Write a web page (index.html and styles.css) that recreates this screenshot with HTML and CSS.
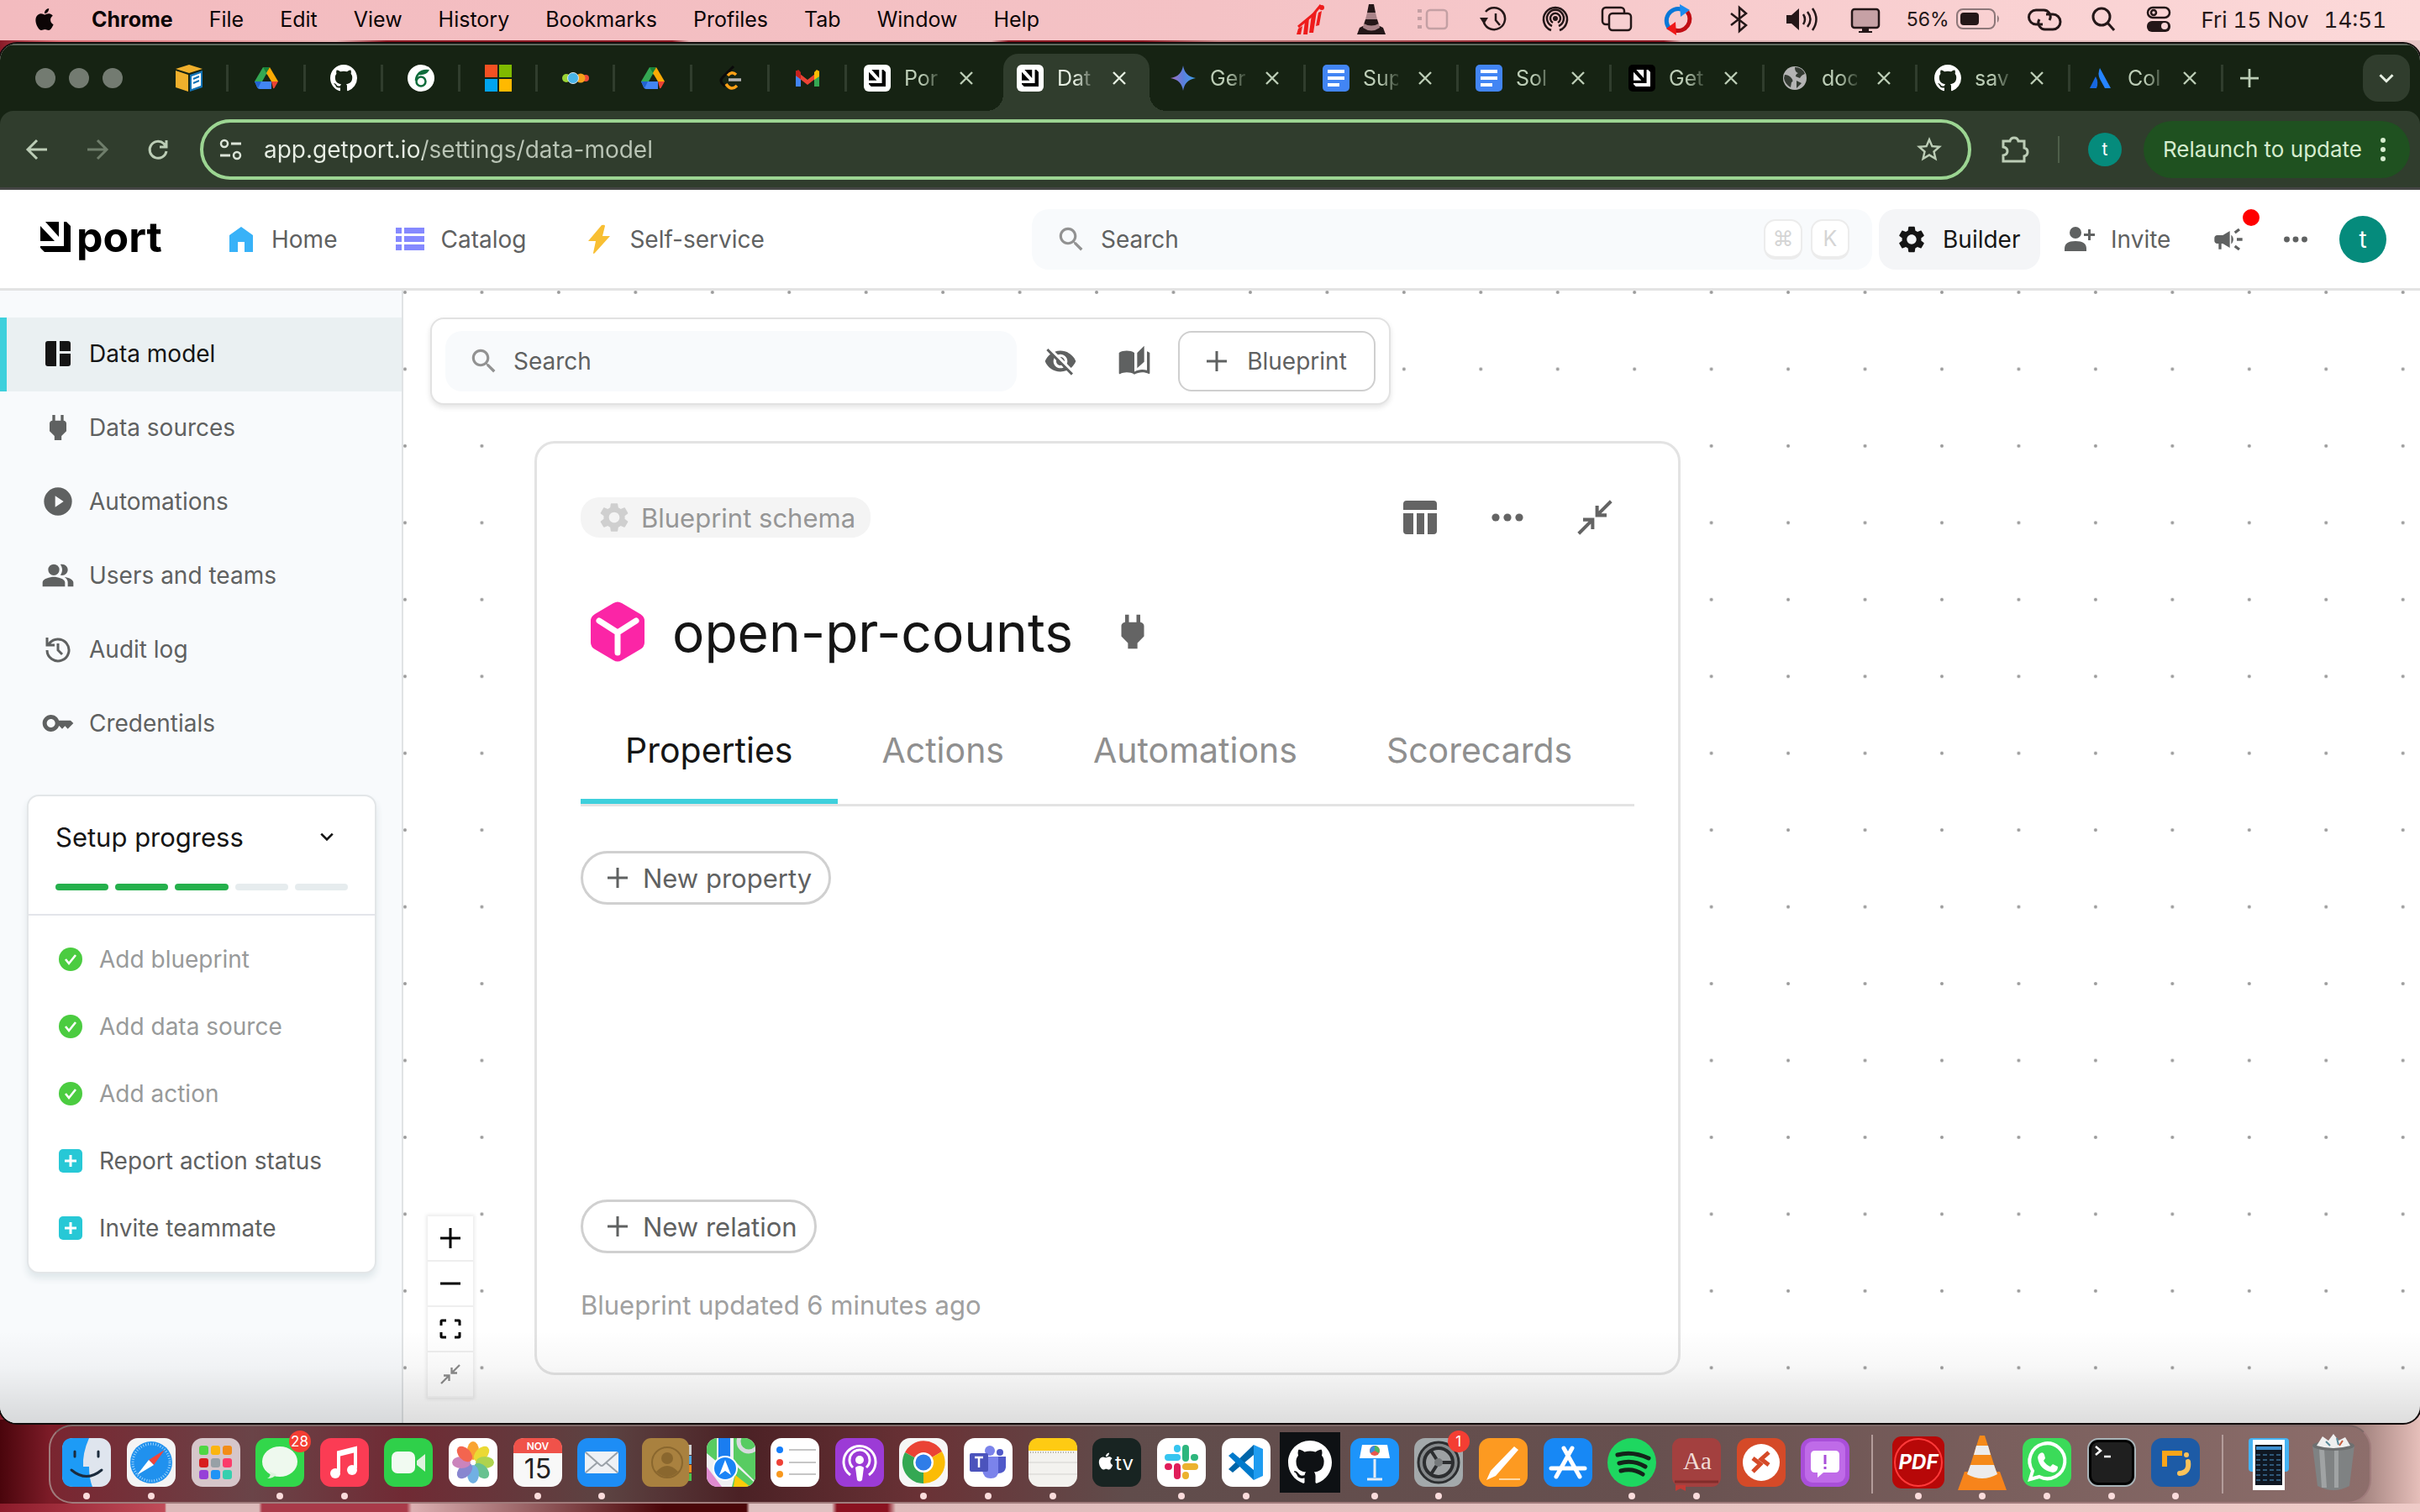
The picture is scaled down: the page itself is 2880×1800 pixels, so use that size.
FILE: index.html
```html
<!DOCTYPE html>
<html lang="en">
<head>
<meta charset="utf-8">
<title>Data model</title>
<link rel="stylesheet" href="styles.css">
</head>
<body>
<svg class="sprite" aria-hidden="true">
  <symbol id="apple" viewBox="0 0 24 24"><path d="M12.152 6.896c-.948 0-2.415-1.078-3.96-1.04-2.04.027-3.91 1.183-4.961 3.014-2.117 3.675-.546 9.103 1.519 12.09 1.013 1.454 2.208 3.09 3.792 3.039 1.52-.065 2.09-.987 3.935-.987 1.831 0 2.35.987 3.96.948 1.637-.026 2.676-1.48 3.676-2.948 1.156-1.688 1.636-3.325 1.662-3.415-.039-.013-3.182-1.221-3.22-4.857-.026-3.04 2.48-4.494 2.597-4.559-1.429-2.09-3.623-2.324-4.39-2.376-2-.156-3.675 1.09-4.61 1.09zM15.53 3.83c.843-1.012 1.4-2.427 1.245-3.83-1.207.052-2.662.805-3.532 1.818-.78.896-1.454 2.338-1.273 3.714 1.338.104 2.715-.688 3.559-1.701"/></symbol>
  <symbol id="github" viewBox="0 0 16 16"><path d="M8 0C3.58 0 0 3.58 0 8c0 3.54 2.29 6.53 5.47 7.59.4.07.55-.17.55-.38 0-.19-.01-.82-.01-1.49-2.01.37-2.53-.49-2.69-.94-.09-.23-.48-.94-.82-1.13-.28-.15-.68-.52-.01-.53.63-.01 1.08.58 1.23.82.72 1.21 1.87.87 2.33.66.07-.52.28-.87.51-1.07-1.78-.2-3.64-.89-3.64-3.95 0-.87.31-1.59.82-2.15-.08-.2-.36-1.02.08-2.12 0 0 .67-.21 2.2.82.64-.18 1.32-.27 2-.27s1.36.09 2 .27c1.53-1.04 2.2-.82 2.2-.82.44 1.1.16 1.92.08 2.12.51.56.82 1.27.82 2.15 0 3.07-1.87 3.75-3.65 3.95.29.25.54.73.54 1.48 0 1.07-.01 1.93-.01 2.2 0 .21.15.46.55.38A8.01 8.01 0 0016 8c0-4.42-3.58-8-8-8z"/></symbol>
  <symbol id="drive" viewBox="0 0 32 32"><path fill="#34a853" d="M12 3h4l3 5L7 28l-5-8z"/><path fill="#188038" d="M12 3h8l-4 7z"/><path fill="#fbab04" d="M20 3l10 17h-8l-6-10z"/><path fill="#4285f4" d="M2 20h20v9H8q-2 0-3-2z"/><path fill="#2263d0" d="M2 20h8l-4 8z"/><path fill="#ea4335" d="M22 20h8l-4 7q-1 2-2 1z"/><path fill="#162313" d="M16 11l5 9H11z"/></symbol>
  <symbol id="portmark" viewBox="0 0 36 36"><path d="M6 0h16v18zM0 5l17 18H0zM28 0h3l5 5v31H5l-5-5v-2h28z"/></symbol>
  <symbol id="portlight" viewBox="0 0 32 32"><rect width="32" height="32" rx="6" fill="#fff"/><svg x="6" y="6" width="20" height="20"><use href="#portmark"/></svg></symbol>
  <symbol id="docs" viewBox="0 0 32 32"><rect width="32" height="32" rx="5" fill="#4285f4"/><path fill="#fff" d="M6 6h20v4H6zM6 14h20v4H6zM6 22h14v4H6z"/></symbol>
  <symbol id="close" viewBox="0 0 16 16"><path d="M1 1l14 14M15 1L1 15" stroke="currentColor" stroke-width="2.4" fill="none"/></symbol>
  <symbol id="gear" viewBox="0 0 24 24"><path d="M19.14 12.94c.04-.3.06-.61.06-.94 0-.32-.02-.64-.07-.94l2.03-1.58c.18-.14.23-.41.12-.61l-1.92-3.32c-.12-.22-.37-.29-.59-.22l-2.39.96c-.5-.38-1.03-.7-1.62-.94l-.36-2.54c-.04-.24-.24-.41-.48-.41h-3.84c-.24 0-.43.17-.47.41l-.36 2.54c-.59.24-1.13.57-1.62.94l-2.39-.96c-.22-.08-.47 0-.59.22L2.74 8.87c-.12.21-.08.47.12.61l2.03 1.58c-.05.3-.09.63-.09.94s.02.64.07.94l-2.03 1.58c-.18.14-.23.41-.12.61l1.92 3.32c.12.22.37.29.59.22l2.39-.96c.5.38 1.03.7 1.62.94l.36 2.54c.05.24.24.41.48.41h3.84c.24 0 .44-.17.47-.41l.36-2.54c.59-.24 1.13-.56 1.62-.94l2.39.96c.22.08.47 0 .59-.22l1.92-3.32c.12-.22.07-.47-.12-.61l-2.01-1.58zM12 15.6c-1.98 0-3.6-1.62-3.6-3.6s1.62-3.6 3.6-3.6 3.6 1.62 3.6 3.6-1.62 3.6-3.6 3.6z"/></symbol>
  <symbol id="search" viewBox="0 0 24 24"><path d="M15.5 14h-.79l-.28-.27C15.41 12.59 16 11.11 16 9.5 16 5.91 13.09 3 9.5 3S3 5.91 3 9.5 5.91 16 9.5 16c1.61 0 3.09-.59 4.23-1.57l.27.28v.79l5 4.99L20.49 19l-4.99-5zm-6 0C7.01 14 5 11.99 5 9.5S7.01 5 9.5 5 14 7.01 14 9.5 11.99 14 9.5 14z"/></symbol>
  <symbol id="plug" viewBox="0 0 24 24"><path d="M16.01 7L16 3h-2v4h-4V3H8v4h-.01C7 6.99 6 7.99 6 8.99v5.49L9.5 18v3h5v-3l3.5-3.51v-5.5c0-1-1-2-1.99-1.99z"/></symbol>
  <symbol id="more" viewBox="0 0 24 24"><circle cx="5" cy="12" r="2.3"/><circle cx="12" cy="12" r="2.3"/><circle cx="19" cy="12" r="2.3"/></symbol>
  <symbol id="plus" viewBox="0 0 24 24"><path d="M12 0v24M0 12h24" stroke="currentColor" stroke-width="3" fill="none"/></symbol>
  <symbol id="collapse" viewBox="0 0 24 24"><path d="M23 1l-9.500 9.500M13.500 4v6.500H20M1 23l9.500-9.500M4 13.500h6.500V20" stroke="currentColor" stroke-width="2.300" fill="none"/></symbol>
  <symbol id="done" viewBox="0 0 28 28"><circle cx="14" cy="14" r="14" fill="#4bcc40"/><path d="M8 14l4 5 8-10" stroke="#fff" stroke-width="2.600" fill="none"/></symbol>
  <symbol id="todo" viewBox="0 0 28 28"><rect width="28" height="28" rx="5" fill="#27c8d6"/><path d="M14 7v14M7 14h14" stroke="#fff" stroke-width="3" fill="none"/></symbol>
  <symbol id="chevron" viewBox="0 0 16 16"><path d="M2 5l6 6 6-6" stroke="currentColor" stroke-width="2.400" fill="none"/></symbol>
</svg>

<div class="desktop">
  <header class="menubar">
    <nav class="menus" aria-label="Menu bar">
      <svg class="i28"><use href="#apple"/></svg>
      <b>Chrome</b><span>File</span><span>Edit</span><span>View</span><span>History</span><span>Bookmarks</span><span>Profiles</span><span>Tab</span><span>Window</span><span>Help</span>
    </nav>
    <div class="status">
      <svg class="i36" viewBox="0 0 36 36"><path d="M2 36l2-7 5-3-2 10zM10 36l2-16 5-4-2 20zM17 34l3-22 6-4-4 26zM25 26l3-16 4-2-3 17z" fill="#ee1c1c"/><path d="M4 27L22 12l9-11" stroke="#ee1c1c" stroke-width="3" fill="none"/><circle cx="32" cy="4" r="3" fill="#ee1c1c"/></svg>
      <svg class="i36" viewBox="0 0 36 36"><path d="M15 0h6l2 10H13zM11 18h14l2 6q-9 5-18 0zM8 26l-4 2-3 8h34l-3-8-4-2q-10 6-20 0z"/><path d="M13 10h10l2 8H11zM9 23q9 5 18 0l1 5q-10 7-20 0z" fill="#a98388"/></svg>
      <svg class="i36 faint" viewBox="0 0 36 36"><rect x="11" y="7" width="24" height="22" rx="4" class="line"/><path d="M0 8h5M0 17h5M0 27h5" stroke="currentColor" stroke-width="4"/></svg>
      <svg class="i36" viewBox="0 0 36 36"><path d="M8 9a13 13 0 1 1-2 13M20 11v8l5 6" class="line"/><path d="M1 16h10l-5 8z"/></svg>
      <svg class="i36" viewBox="0 0 36 36"><circle cx="18" cy="17" r="3"/><path d="M13 31a14 14 0 1 1 10 0M14 26a10 10 0 1 1 8 0M15 22a6 6 0 1 1 6 0" class="line"/></svg>
      <svg class="i36" viewBox="0 0 36 36"><rect x="1" y="4" width="26" height="20" rx="4" class="line"/><rect x="9" y="11" width="26" height="20" rx="4" class="line front"/></svg>
      <svg class="i36" viewBox="0 0 36 36"><path d="M8 29A14 14 0 0 1 22 6" stroke="#0a78d8" stroke-width="5" fill="none"/><path d="M20 0l12 7-11 8z" fill="#1b8cf0"/><path d="M29 9a14 14 0 0 1-15 22" stroke="#c00d14" stroke-width="5" fill="none"/><path d="M16 37L4 29l11-8z" fill="#f01818"/></svg>
      <svg class="i36" viewBox="0 0 36 36"><path d="M8 11l18 14-8 7V4l8 7L8 25" class="line"/></svg>
      <svg class="i40" viewBox="0 0 40 36"><path d="M1 13h6l9-8v26l-9-8H1z"/><path d="M21 12q4 6 0 12M26 9q7 9 0 18M32 5q9 13 0 26" class="line"/></svg>
      <svg class="i36" viewBox="0 0 36 36"><rect x="2" y="6" width="32" height="22" rx="3" class="line shaded"/><path d="M14 28h8v4h4v2H10v-2h4z"/></svg>
      <span class="battery">56%<svg viewBox="0 0 52 26"><rect x="1" y="1" width="45" height="23" rx="7" fill="none" stroke="#8d7779" stroke-width="2"/><rect x="5" y="5" width="22" height="15" rx="4"/><path d="M49 8q4 4 0 9z" fill="#8d7779"/></svg></span>
      <svg class="i44" viewBox="0 0 44 30"><path d="M20 21h-8a8 8 0 1 1 0-17h8a8 8 0 0 1 8 12M24 9h8a8 8 0 1 1 0 18h-8a8 8 0 0 1-8-12" class="line thick"/></svg>
      <svg class="i36" viewBox="0 0 36 36"><circle cx="16" cy="15" r="10" class="line thick"/><path d="M23 22l8 9" class="line thick"/></svg>
      <svg class="i36" viewBox="0 0 36 36"><rect x="5" y="4" width="26" height="12" rx="6" class="line"/><circle cx="12" cy="10" r="3" class="line"/><rect x="4" y="20" width="28" height="13" rx="6"/><circle cx="25" cy="26" r="4" fill="#f9d4d5"/></svg>
      <time><span>Fri 15 Nov</span><span>14:51</span></time>
    </div>
  </header>

  <main class="window">
    <div class="chrome">
    <div class="tabstrip">
      <div class="lights"><i></i><i></i><i></i></div>
      <div class="pins">
        <button aria-label="Cloud console"><svg viewBox="0 0 32 32"><path d="M16 0l16 5-16 5L0 5z" fill="#f0b02c"/><path d="M0 7l15 5v20L0 27z" fill="#f0b02c"/><path d="M17 12l15-5v20l-15 5z" fill="#1272b5"/><path d="M19 14l11-4v15l-11 4z" fill="#fff"/><path d="M21 17l7-3M21 22l7-3" stroke="#1272b5" stroke-width="2"/></svg></button>
        <button aria-label="Drive"><svg><use href="#drive"/></svg></button>
        <button aria-label="GitHub"><svg class="white"><use href="#github"/></svg></button>
        <button aria-label="Guide"><svg viewBox="0 0 32 32"><circle cx="16" cy="16" r="16" fill="#fff"/><path d="M15 9q-5 4-5 10" fill="none" stroke="#0f6c3c" stroke-width="2.500"/><circle cx="16" cy="20" r="5.500" fill="none" stroke="#0f6c3c" stroke-width="2.500"/><path d="M13 10q3-5 13-4-3 7-13 6z" fill="#0f6c3c"/></svg></button>
        <button aria-label="Microsoft"><svg viewBox="0 0 32 32"><path fill="#f25022" d="M0 0h15v15H0z"/><path fill="#7fba00" d="M17 0h15v15H17z"/><path fill="#00a4ef" d="M0 17h15v15H0z"/><path fill="#ffb900" d="M17 17h15v15H17z"/></svg></button>
        <button aria-label="Community"><svg viewBox="0 0 32 32"><circle cx="5" cy="16" r="5" fill="#9bd334"/><circle cx="28" cy="16" r="4" fill="#ef4a3a"/><circle cx="22" cy="16" r="5.500" fill="#f7a11b"/><circle cx="13" cy="16" r="6.500" fill="#49b4e8" stroke="#dfe8ee"/></svg></button>
        <button aria-label="Drive"><svg><use href="#drive"/></svg></button>
        <button aria-label="Practice"><svg viewBox="0 0 32 32"><path d="M20 2L7 15q-4 4 0 8l3 3" stroke="#0a0a0a" stroke-width="3" fill="none"/><path d="M13 13q5-6 10-1M11 23q6 9 13 2" stroke="#ffa116" stroke-width="3.500" fill="none"/><path d="M14 18h15" stroke="#b3b3b3" stroke-width="3.500"/></svg></button>
        <button aria-label="Gmail"><svg viewBox="0 0 32 32"><path d="M2 8v18h6V13z" fill="#4285f4"/><path d="M30 8v18h-6V13z" fill="#34a853"/><path d="M2 7l14 11L30 7v6L16 24 2 13z" fill="#ea4335"/><path d="M24 9l3-3 3 2v6l-6 4z" fill="#fbbc04"/><path d="M2 8l3-2 3 3v8l-6-4z" fill="#c5221f"/></svg></button>
      </div>
      <div class="tabs">
        <div class="tab"><svg><use href="#portlight"/></svg><span>Por</span><button aria-label="Close tab"><svg><use href="#close"/></svg></button></div>
        <div class="tab active"><svg><use href="#portlight"/></svg><span>Dat</span><button aria-label="Close tab"><svg><use href="#close"/></svg></button></div>
        <div class="tab"><svg viewBox="0 0 32 32"><defs><linearGradient id="gem"><stop offset="0" stop-color="#a46fc0"/><stop offset=".5" stop-color="#5b7fdc"/><stop offset="1" stop-color="#3fa0ea"/></linearGradient></defs><path fill="url(#gem)" d="M16 1q2 13 15 15-13 2-15 15Q14 18 1 16 14 14 16 1z"/></svg><span>Ger</span><button aria-label="Close tab"><svg><use href="#close"/></svg></button></div>
        <div class="tab"><svg><use href="#docs"/></svg><span>Sup</span><button aria-label="Close tab"><svg><use href="#close"/></svg></button></div>
        <div class="tab"><svg><use href="#docs"/></svg><span>Sol</span><button aria-label="Close tab"><svg><use href="#close"/></svg></button></div>
        <div class="tab"><svg viewBox="0 0 32 32"><rect width="32" height="32" rx="5" fill="#000"/><svg class="white" x="6" y="6" width="20" height="20"><use href="#portmark"/></svg></svg><span>Get</span><button aria-label="Close tab"><svg><use href="#close"/></svg></button></div>
        <div class="tab"><svg viewBox="0 0 32 32"><circle cx="16" cy="16" r="14" fill="#b4b4b4"/><path d="M4 12q5 0 8 4t0 5l-1 6q-7-4-8-11zM16 3q9 0 12 8-4 1-6 5l-5-2q0-3 3-4-4-1-4-7zM18 19l6 3-6 6z" fill="#343b33"/></svg><span>doc</span><button aria-label="Close tab"><svg><use href="#close"/></svg></button></div>
        <div class="tab"><svg class="white"><use href="#github"/></svg><span>sav</span><button aria-label="Close tab"><svg><use href="#close"/></svg></button></div>
        <div class="tab"><svg viewBox="0 0 32 32"><path d="M15 4q-3 7 0 13l6 11h7z" fill="#2684ff"/><path d="M10 14L3 28h8q3-7-1-14z" fill="#1767e0"/></svg><span>Col</span><button aria-label="Close tab"><svg><use href="#close"/></svg></button></div>
      </div>
      <button class="newtab" aria-label="New tab"><svg><use href="#plus"/></svg></button>
      <button class="tabmenu" aria-label="Search tabs"><svg><use href="#chevron"/></svg></button>
    </div>

    <div class="toolbar">
      <button aria-label="Back"><svg viewBox="0 0 24 24"><path d="M24 12H2M12 1L1 12l11 11" class="line thick"/></svg></button>
      <button class="dim" aria-label="Forward"><svg viewBox="0 0 24 24"><path d="M0 12h22M12 1l11 11-11 11" class="line thick"/></svg></button>
      <button aria-label="Reload"><svg viewBox="0 0 24 24"><path d="M22 14a10 10 0 1 1-3-9l3 4M22 1v8h-8" class="line thick"/></svg></button>
      <label class="omnibox">
        <svg viewBox="0 0 28 28"><circle cx="6" cy="7" r="4" class="line"/><path d="M14 7h12M1 21h12" class="line thick"/><circle cx="21" cy="21" r="4" class="line"/></svg>
        <input type="text" aria-label="Address" value="app.getport.io/settings/data-model">
        <svg class="star" viewBox="0 0 24 24"><path d="M22 9.240l-7.190-.62L12 2 9.190 8.630 2 9.240l5.460 4.730L5.820 21 12 17.270 18.180 21l-1.630-7.030L22 9.240zM12 15.400l-3.760 2.270 1-4.280-3.320-2.880 4.380-.38L12 6.100l1.710 4.040 4.380.38-3.320 2.880 1 4.280L12 15.400z"/></svg>
      </label>
      <button class="puzzle" aria-label="Extensions"><svg viewBox="0 0 34 34"><path d="M3 7h8q1-4 5-4t5 4h7v8q4 1 4 5t-4 5v6H3v-7q5-1 5-5t-5-5z" class="line thick"/></svg></button>
      <i class="rule"></i>
      <span class="avatar small">t</span>
      <button class="relaunch">Relaunch to update<svg viewBox="0 0 6 30"><circle cx="3" cy="4" r="3"/><circle cx="3" cy="15" r="3"/><circle cx="3" cy="26" r="3"/></svg></button>
    </div>
    </div>

    <div class="appbar">
      <a class="logo" href="#"><svg><use href="#portmark"/></svg>port</a>
      <nav class="topnav">
        <a href="#"><svg viewBox="0 0 36 36"><path d="M18 3L4 13v20h10V21h8v12h10V13z" fill="#38b2f8"/></svg>Home</a>
        <a href="#"><svg viewBox="0 0 36 36"><path d="M1 4h7v7H1zM11 4h24v7H11zM1 14h7v7H1zM11 14h24v7H11zM1 24h7v7H1zM11 24h24v7H11z" fill="#8589ff"/></svg>Catalog</a>
        <a href="#"><svg viewBox="0 0 36 36"><path d="M21 1L5 20h9l-3 14q0 2 2 0l18-20h-9l3-12q0-2-4-1z" fill="#f8bf33"/></svg>Self-service</a>
      </nav>
      <label class="search global"><svg><use href="#search"/></svg><input type="text" placeholder="Search" aria-label="Search"><kbd>⌘</kbd><kbd>K</kbd></label>
      <button class="builder"><svg><use href="#gear"/></svg>Builder</button>
      <button class="invite"><svg viewBox="0 0 38 38"><circle cx="14" cy="11" r="7"/><path d="M1 33v-3q0-9 13-9t13 9v3zM29 7h3v5h5v3h-5v5h-3v-5h-5v-3h5z"/></svg>Invite</button>
      <button class="news" aria-label="Announcements"><svg viewBox="0 0 24 24"><path d="M18 11v2h4v-2h-4zm-2 6.610c.96.71 2.210 1.650 3.200 2.390.4-.53.8-1.070 1.200-1.600-.99-.74-2.240-1.680-3.200-2.400-.4.54-.8 1.080-1.200 1.610zM20.400 5.600c-.4-.53-.8-1.070-1.200-1.600-.99.74-2.240 1.680-3.200 2.400.4.53.8 1.070 1.200 1.600.96-.72 2.210-1.650 3.200-2.400zM4 9c-1.100 0-2 .9-2 2v2c0 1.100.9 2 2 2h1v4h2v-4h1l5 3V6L8 9H4zm11.500 3c0-1.330-.58-2.530-1.500-3.350v6.690c.92-.81 1.500-2.010 1.500-3.340z"/></svg></button>
      <button class="dots" aria-label="More"><svg><use href="#more"/></svg></button>
      <button class="avatar" aria-label="Account">t</button>
    </div>

    <div class="body">
      <aside class="sidebar">
        <nav>
          <a class="on" href="#"><svg viewBox="0 0 30 30"><path d="M3 0h10v30H3q-3 0-3-3V3q0-3 3-3zM17 0h10q3 0 3 3v9H17zM17 15h13v12q0 3-3 3H17z"/></svg>Data model</a>
          <a href="#"><svg class="big"><use href="#plug"/></svg>Data sources</a>
          <a href="#"><svg viewBox="0 0 24 24" class="big"><path d="M12 2a10 10 0 1 0 0 20 10 10 0 0 0 0-20zm-2 14V8l6 4z"/></svg>Automations</a>
          <a href="#"><svg viewBox="0 0 24 24" class="big"><path d="M16.670 13.130C18.040 14.060 19 15.320 19 17v3h4v-3c0-2.180-3.570-3.470-6.330-3.870zM15 12c2.210 0 4-1.790 4-4s-1.790-4-4-4c-.47 0-.91.1-1.330.24C14.500 5.270 15 6.580 15 8s-.5 2.730-1.330 3.760c.42.14.86.24 1.330.24zM9 12a4 4 0 100-8 4 4 0 000 8zm0 1c-2.670 0-8 1.340-8 4v3h16v-3c0-2.660-5.330-4-8-4z"/></svg>Users and teams</a>
          <a href="#"><svg viewBox="0 0 30 30"><path d="M4 9A13 13 0 1 1 2 16M2 1v9h9M15 8v8l5 5" class="line thick"/></svg>Audit log</a>
          <a href="#"><svg viewBox="0 0 24 24" class="big"><path d="M21 10h-8.350C11.830 7.670 9.610 6 7 6c-3.310 0-6 2.690-6 6s2.690 6 6 6c2.610 0 4.830-1.670 5.650-4H13l2 2 2-2 2 2 4-4.040L21 10zM7 15c-1.650 0-3-1.350-3-3s1.350-3 3-3 3 1.350 3 3-1.350 3-3 3z"/></svg>Credentials</a>
        </nav>
        <section class="setup">
          <button class="setup-head" aria-label="Toggle setup progress">Setup progress<svg><use href="#chevron"/></svg></button>
          <div class="bars"><i class="full"></i><i class="full"></i><i class="full"></i><i></i><i></i></div>
          <ul>
            <li class="finished"><svg><use href="#done"/></svg>Add blueprint</li>
            <li class="finished"><svg><use href="#done"/></svg>Add data source</li>
            <li class="finished"><svg><use href="#done"/></svg>Add action</li>
            <li><svg><use href="#todo"/></svg>Report action status</li>
            <li><svg><use href="#todo"/></svg>Invite teammate</li>
          </ul>
        </section>
      </aside>

      <section class="canvas">
        <svg class="grid" aria-hidden="true"><defs><pattern id="dots" width="91.450" height="91.450" patternUnits="userSpaceOnUse"><circle cx="2" cy="2" r="2" fill="#9a9a9a"/></pattern></defs><rect width="100%" height="100%" fill="url(#dots)"/></svg>
        <div class="panel">
          <label class="search"><svg><use href="#search"/></svg><input type="text" placeholder="Search" aria-label="Search blueprints"></label>
          <button class="icon" aria-label="Hide blueprints"><svg viewBox="0 0 24 24"><path d="M12 7c2.760 0 5 2.240 5 5 0 .65-.13 1.260-.36 1.830l2.920 2.920c1.510-1.260 2.700-2.890 3.430-4.750-1.730-4.390-6-7.500-11-7.500-1.400 0-2.740.25-3.980.7l2.160 2.160C10.740 7.130 11.350 7 12 7zM2 4.270l2.280 2.280.46.46C3.080 8.300 1.780 10.020 1 12c1.730 4.390 6 7.500 11 7.500 1.550 0 3.030-.3 4.380-.84l.42.42L19.730 22 21 20.730 3.270 3 2 4.270zM7.530 9.800l1.550 1.550c-.05.21-.08.43-.08.65 0 1.660 1.340 3 3 3 .22 0 .44-.03.65-.08l1.550 1.550c-.67.33-1.410.53-2.200.53-2.760 0-5-2.240-5-5 0-.79.2-1.530.53-2.200zm4.310-.78l3.150 3.150.02-.16c0-1.660-1.340-3-3-3l-.17.01z"/></svg></button>
          <button class="icon" aria-label="Legend"><svg viewBox="0 0 24 24"><path d="M19 1l-5 5v11l5-4.500V1zM1 6v14.650c0 .25.25.5.5.5.1 0 .15-.05.25-.05C3.100 20.450 5.050 20 6.500 20c1.950 0 4.050.4 5.500 1.500V6c-1.450-1.100-3.550-1.500-5.500-1.500S2.450 4.900 1 6zm22 13.500V6c-.6-.45-1.250-.75-2-1v13.500c-1.100-.35-2.300-.5-3.500-.5-1.700 0-4.150.65-5.500 1.500v2c1.350-.85 3.800-1.500 5.500-1.500 1.650 0 3.350.3 4.750 1.050.1.05.15.05.25.05.25 0 .5-.25.5-.5v-1.100z"/></svg></button>
          <button class="add"><svg><use href="#plus"/></svg>Blueprint</button>
        </div>

        <article class="node">
          <div class="node-top">
            <span class="chip"><svg><use href="#gear"/></svg>Blueprint schema</span>
            <span class="tools">
              <button aria-label="Table"><svg viewBox="0 0 24 24"><path d="M10 9.500h4.500V22H10zM16.500 22H20q2 0 2-2V9.500h-5.500zM20 2H4Q2 2 2 4v3.500h20V4q0-2-2-2zM2 20q0 2 2 2h4V9.500H2z"/></svg></button>
              <button aria-label="More"><svg><use href="#more"/></svg></button>
              <button aria-label="Collapse"><svg><use href="#collapse"/></svg></button>
            </span>
          </div>
          <h1><svg class="cube" viewBox="0 0 64 72"><path d="M27 2q5-3 10 0l22 13q5 3 5 8v26q0 5-5 8L37 70q-5 3-10 0L5 57q-5-3-5-8V23q0-5 5-8z" fill="#fb25a6"/><path d="M10 23l22 14 22-14M32 37v24" stroke="#fff" stroke-width="7" stroke-linecap="round" fill="none"/></svg>open-pr-counts<svg class="plug"><use href="#plug"/></svg></h1>
          <div class="node-tabs" role="tablist">
            <button class="on" role="tab">Properties</button><button role="tab">Actions</button><button role="tab">Automations</button><button role="tab">Scorecards</button>
          </div>
          <button class="pill"><svg><use href="#plus"/></svg>New property</button>
          <button class="pill relation"><svg><use href="#plus"/></svg>New relation</button>
          <p>Blueprint updated 6 minutes ago</p>
        </article>

        <div class="zoom">
          <button aria-label="Zoom in"><svg><use href="#plus"/></svg></button>
          <button aria-label="Zoom out"><svg viewBox="0 0 24 24"><path d="M0 12h24" stroke="currentColor" stroke-width="3"/></svg></button>
          <button aria-label="Fit view"><svg viewBox="0 0 24 24"><path d="M1 8V3q0-1 1-1h5M17 2h5q1 0 1 1v5M23 16v5q0 1-1 1h-5M7 22H2q-1 0-1-1v-5" stroke="currentColor" stroke-width="3" fill="none"/></svg></button>
          <button class="dim" aria-label="Collapse all"><svg><use href="#collapse"/></svg></button>
        </div>
      </section>
    </div>
  </main>

  <nav class="dock" aria-label="Dock">
    <button class="run" aria-label="Finder"><svg viewBox="0 0 58 58"><rect width="58" height="58" rx="13" fill="#dfe5ee"/><path d="M13 0h19q-8 18-7 34h7q0 14 4 24H13Q0 58 0 45V13Q0 0 13 0z" fill="#1d9bf6"/><path d="M15 16v6M43 16v6M11 38q18 15 36 0" stroke="#1b2b3c" stroke-width="3" stroke-linecap="round" fill="none"/></svg></button>
    <button class="run" aria-label="Safari"><svg viewBox="0 0 58 58"><rect width="58" height="58" rx="13" fill="#f4f4f4"/><circle cx="29" cy="29" r="25" fill="#2091ee"/><circle cx="29" cy="29" r="22" fill="none" stroke="#9fd4fb" stroke-width="3" stroke-dasharray="1 2"/><path d="M45 14L32 32l-6-6z" fill="#f0453b"/><path d="M12 44l14-18 6 6z" fill="#fff"/></svg></button>
    <button aria-label="Launchpad"><svg viewBox="0 0 58 58"><rect width="58" height="58" rx="13" fill="#d6c6ca"/><g><rect x="9" y="9" width="11" height="11" rx="3" fill="#4fd643"/><rect x="23" y="9" width="11" height="11" rx="3" fill="#fbb50f"/><rect x="37" y="9" width="11" height="11" rx="3" fill="#f28c18"/><rect x="9" y="24" width="11" height="11" rx="3" fill="#d81d1d"/><rect x="23" y="24" width="11" height="11" rx="3" fill="#97a0a6"/><rect x="37" y="24" width="11" height="11" rx="3" fill="#fb3c6a"/><rect x="9" y="38" width="11" height="11" rx="3" fill="#9641d8"/><rect x="23" y="38" width="11" height="11" rx="3" fill="#1f93f5"/><rect x="37" y="38" width="11" height="11" rx="3" fill="#37cfae"/></g></svg></button>
    <button class="run" aria-label="Messages"><svg viewBox="0 0 58 58"><rect width="58" height="58" rx="13" fill="#32d74b"/><ellipse cx="29" cy="28" rx="21" ry="18" fill="#eef9ee"/><path d="M17 40q2 6-3 8 8 0 11-5z" fill="#dff3df"/></svg><em>28</em></button>
    <button class="run" aria-label="Music"><svg viewBox="0 0 58 58"><rect width="58" height="58" rx="13" fill="#fb3c54"/><path d="M22 40V17l20-5v24" stroke="#fff" stroke-width="4" fill="none"/><path d="M22 16l20-5v6l-20 5z" fill="#fff"/><circle cx="18" cy="42" r="6" fill="#fff"/><circle cx="38" cy="38" r="6" fill="#fff"/></svg></button>
    <button aria-label="FaceTime"><svg viewBox="0 0 58 58"><rect width="58" height="58" rx="13" fill="#2fd04a"/><rect x="9" y="16" width="28" height="26" rx="7" fill="#f1faf1"/><path d="M39 27l10-8v21l-10-8z" fill="#dff2df"/></svg></button>
    <button aria-label="Photos"><svg viewBox="0 0 58 58"><rect width="58" height="58" rx="13" fill="#fff"/><g opacity=".9"><ellipse cx="29" cy="15" rx="7" ry="11" fill="#f99b1c"/><ellipse cx="39" cy="19" rx="7" ry="11" transform="rotate(45 39 19)" fill="#e9d51f"/><ellipse cx="43" cy="29" rx="11" ry="7" fill="#a6cf3c"/><ellipse cx="39" cy="39" rx="7" ry="11" transform="rotate(-45 39 39)" fill="#58bc84"/><ellipse cx="29" cy="43" rx="7" ry="11" fill="#62a8e0"/><ellipse cx="19" cy="39" rx="7" ry="11" transform="rotate(45 19 39)" fill="#7c79cb"/><ellipse cx="15" cy="29" rx="11" ry="7" fill="#c677b5"/><ellipse cx="19" cy="19" rx="7" ry="11" transform="rotate(-45 19 19)" fill="#f2553c"/></g></svg></button>
    <button class="run" aria-label="Calendar"><svg viewBox="0 0 58 58"><rect width="58" height="58" rx="13" fill="#f8f8f8"/><path d="M0 18v-5Q0 0 13 0h32q13 0 13 13v5z" fill="#f0524a"/><text x="29" y="14" class="month">NOV</text><text x="29" y="48" class="day">15</text></svg></button>
    <button class="run" aria-label="Mail"><svg viewBox="0 0 58 58"><rect width="58" height="58" rx="13" fill="#1d8df5"/><rect x="9" y="16" width="40" height="26" rx="3" fill="#eef1f5"/><path d="M10 17l17 15q2 2 4 0l17-15M10 41l14-12M48 41L34 29" stroke="#9aa1a8" stroke-width="2" fill="none"/></svg></button>
    <button aria-label="Contacts"><svg viewBox="0 0 58 58"><path d="M54 8h5v12h-5z" fill="#cfcfcf"/><path d="M54 21h5v10h-5z" fill="#4fa6e0"/><path d="M54 32h5v9h-5z" fill="#f08b1d"/><path d="M54 42h5v9h-5z" fill="#4cc04c"/><rect width="56" height="58" rx="11" fill="#a9813f"/><circle cx="30" cy="29" r="18" fill="none" stroke="#8a672e" stroke-width="2"/><circle cx="30" cy="24" r="7" fill="#8a672e"/><path d="M17 40q13-14 26 0-13 12-26 0z" fill="#8a672e"/></svg></button>
    <button aria-label="Maps"><svg viewBox="0 0 58 58"><defs><clipPath id="sq"><rect width="58" height="58" rx="13"/></clipPath></defs><g clip-path="url(#sq)"><path fill="#eef0f2" d="M0 0h58v58H0z"/><path d="M0 0h12v28L0 18zM32 0h26v52L32 26zM30 58l28 0V54L36 34z" fill="#58cc62"/><path d="M0 34l18 24H0z" fill="#e08bd0"/><path d="M34 44l18 14H32z" fill="#fbcb0a"/><path d="M14 0h14v30H14z" fill="#1a7df0"/><circle cx="50" cy="4" r="12" fill="none" stroke="#d7dadd" stroke-width="5"/><circle cx="22" cy="36" r="14" fill="#1a84f6" stroke="#fff" stroke-width="2"/><path d="M22 26l7 18-7-5-7 5z" fill="#fff"/></g></svg></button>
    <button aria-label="Reminders"><svg viewBox="0 0 58 58"><rect width="58" height="58" rx="13" fill="#fff"/><path d="M22 14h32M22 29h32M22 43h32" stroke="#c6c6c6" stroke-width="2"/><circle cx="11" cy="14" r="4" fill="#147efb"/><circle cx="11" cy="29" r="4" fill="#ef4136"/><circle cx="11" cy="43" r="4" fill="#f8981d"/></svg></button>
    <button aria-label="Podcasts"><svg viewBox="0 0 58 58"><rect width="58" height="58" rx="13" fill="#9c3bd6"/><path d="M18 44a19 19 0 1 1 22 0M21 35a12 12 0 1 1 16 0" stroke="#fff" stroke-width="3" fill="none"/><circle cx="29" cy="26" r="5" fill="#fff"/><path d="M24 35q5-4 10 0l-2 15q-3 3-6 0z" fill="#fff"/></svg></button>
    <button class="run" aria-label="Chrome"><svg viewBox="0 0 58 58"><rect width="58" height="58" rx="13" fill="#f6f6f6"/><path d="M29 29L7 17a25 25 0 0 1 44-1z" fill="#ea4335"/><path d="M29 29l22-13a25 25 0 0 1-22 38z" fill="#fbbc05"/><path d="M29 29l0 25A25 25 0 0 1 7 17z" fill="#34a853"/><circle cx="29" cy="29" r="12" fill="#fff"/><circle cx="29" cy="29" r="9.500" fill="#2f7de8"/></svg></button>
    <button class="run" aria-label="Teams"><svg viewBox="0 0 58 58"><rect width="58" height="58" rx="13" fill="#fff"/><circle cx="31" cy="15" r="6" fill="#7b83eb"/><circle cx="43" cy="17" r="4" fill="#5059c9"/><path d="M22 22h20v16q-1 10-10 10t-10-10z" fill="#7b83eb"/><path d="M41 22h9v13q-1 7-9 7z" fill="#5059c9"/><rect x="7" y="18" width="22" height="22" rx="2" fill="#4b53bc"/><path d="M13 23h10M18 23v12" stroke="#fff" stroke-width="2.500"/></svg></button>
    <button class="run" aria-label="Notes"><svg viewBox="0 0 58 58"><rect width="58" height="58" rx="13" fill="#f3f2ef"/><path d="M0 15v-2Q0 0 13 0h32q13 0 13 13v2z" fill="#fecb13"/><path d="M0 29h58M0 43h58" stroke="#d3d2cf"/><path d="M2 17h54" stroke="#b3b1ab" stroke-width="2" stroke-dasharray="1 2"/></svg></button>
    <button aria-label="TV"><svg viewBox="0 0 58 58"><rect width="58" height="58" rx="13" fill="#182422"/><svg x="6" y="17" width="20" height="21" class="white"><use href="#apple"/></svg><text x="38" y="38" class="tv">tv</text></svg></button>
    <button class="run" aria-label="Slack"><svg viewBox="0 0 58 58"><rect width="58" height="58" rx="13" fill="#fff"/><g stroke-width="8" stroke-linecap="round"><path d="M13 23h11M24 12v1" stroke="#36c5f0"/><path d="M34 12v12M44 23h1" stroke="#2eb67d"/><path d="M34 34h11M34 44v1" stroke="#ecb22e"/><path d="M24 34v11M13 34h1" stroke="#e01e5a"/></g></svg></button>
    <button class="run" aria-label="Code"><svg viewBox="0 0 58 58"><rect width="58" height="58" rx="13" fill="#fff"/><path d="M38 8l11 5v32l-11 5z" fill="#1f9cf0"/><path d="M38 8v12L13 41l-5-4z" fill="#0065a9"/><path d="M38 50V38L13 17l-5 4z" fill="#007acc"/></svg></button>
    <button class="square" aria-label="GitHub"><svg viewBox="0 0 72 72"><path fill="#0e1114" d="M0 0h72v72H0z"/><svg x="10" y="10" width="52" height="52" class="white"><use href="#github"/></svg></svg></button>
    <button class="run" aria-label="Keynote"><svg viewBox="0 0 58 58"><rect width="58" height="58" rx="13" fill="#1d94fa"/><path d="M14 8h30l3 16H11z" fill="#fff"/><path d="M29 25v22M20 49h18" stroke="#e6edf5" stroke-width="3"/><circle cx="29" cy="15" r="6" fill="#e8574e"/><path d="M29 15v-6a6 6 0 0 1 5 9z" fill="#49b864"/><path d="M29 15l-5 3a6 6 0 0 1 5-9z" fill="#3a8fe0"/></svg></button>
    <button class="run" aria-label="Settings"><svg viewBox="0 0 58 58"><rect width="58" height="58" rx="13" fill="#a3a9ab"/><circle cx="29" cy="29" r="24" fill="#85898b" stroke="#2c2e30" stroke-width="3"/><circle cx="29" cy="29" r="17" fill="#9da1a3" stroke="#2c2e30" stroke-width="4"/><path d="M29 29h17M29 29l-9-14M29 29l-9 14" stroke="#2c2e30" stroke-width="4"/><circle cx="29" cy="29" r="5" fill="#75797b"/></svg><em>1</em></button>
    <button aria-label="Pages"><svg viewBox="0 0 58 58"><rect width="58" height="58" rx="13" fill="#fd9a21"/><path d="M42 10l5 4-27 31-11 5 5-11z" fill="#fff"/><path d="M24 49h25" stroke="#ffd9a5" stroke-width="2"/></svg></button>
    <button aria-label="App Store"><svg viewBox="0 0 58 58"><rect width="58" height="58" rx="13" fill="#1788f5"/><path d="M24 12l19 34M34 12L15 46M9 36h40" stroke="#fff" stroke-width="5" stroke-linecap="round"/></svg></button>
    <button class="run" aria-label="Spotify"><svg viewBox="0 0 58 58"><circle cx="29" cy="29" r="29" fill="#1ed760"/><path d="M12 20q18-5 37 4M14 30q16-5 31 4M16 39q14-4 26 4" stroke="#14241a" stroke-width="5" stroke-linecap="round" fill="none"/></svg></button>
    <button class="run" aria-label="Dictionary"><svg viewBox="0 0 58 58"><rect width="58" height="58" rx="11" fill="#a3403f"/><path d="M3 52h52" stroke="#812c2b" stroke-width="3"/><path d="M4 56h12v7l-6-3-6 3z" fill="#c23a35"/><text x="30" y="37" class="aa">Aa</text></svg></button>
    <button aria-label="Remote"><svg viewBox="0 0 58 58"><rect width="58" height="58" rx="13" fill="#d54a28"/><circle cx="29" cy="29" r="22" fill="#fff"/><path d="M19 24l9 7-9 9M38 17l-9 8 9 7" stroke="#d54a28" stroke-width="5" fill="none"/></svg></button>
    <button aria-label="Feedback"><svg viewBox="0 0 58 58"><rect width="58" height="58" rx="13" fill="#a94fd9"/><rect x="5" y="4" width="48" height="49" rx="9" fill="#bf6be8"/><path d="M17 15h24q5 0 5 5v16q0 5-5 5H27l-7 6v-6h-3q-5 0-5-5V20q0-5 5-5z" fill="#fff"/><path d="M29 20v11M29 34v3" stroke="#a94fd9" stroke-width="3"/></svg></button>
    <i class="rule"></i>
    <button class="run" aria-label="PDF"><svg viewBox="0 0 58 58"><rect x="-2" y="-2" width="62" height="62" rx="11" fill="#b70808"/><circle cx="29" cy="29" r="28" fill="none" stroke="#ff3a3a" stroke-width="2"/><text x="29" y="37" class="pdf">PDF</text></svg></button>
    <button class="run" aria-label="VLC"><svg viewBox="0 0 58 58"><path d="M8 40h42l8 22H0z" fill="#f7841b"/><path d="M26-3h6l15 47q-18 12-36 0z" fill="#f58a1a"/><path d="M22 9h14l3 11H19zM15 32h28l4 11q-18 10-36 0z" fill="#ececec"/></svg></button>
    <button class="run" aria-label="WhatsApp"><svg viewBox="0 0 58 58"><rect width="58" height="58" rx="13" fill="#3bdb59"/><path d="M9 49l3-10a21 21 0 1 1 8 7z" fill="none" stroke="#fff" stroke-width="4"/><path d="M21 18q4-2 5 2l1 4-2 3q3 5 8 7l3-3 6 3q0 6-6 7-16-3-18-18 0-3 3-5z" fill="#fff"/></svg></button>
    <button class="run" aria-label="Terminal"><svg viewBox="0 0 58 58"><rect width="58" height="58" rx="13" fill="#a9b4b8"/><rect x="2" y="2" width="54" height="54" rx="11" fill="#000"/><rect x="5" y="5" width="48" height="48" rx="8" fill="#1f1f1f"/><path d="M10 10l6 5-6 5M20 22h8" stroke="#fff" stroke-width="2.500" fill="none"/></svg></button>
    <button class="run" aria-label="Jamf"><svg viewBox="0 0 58 58"><rect width="58" height="58" rx="13" fill="#1d5ba6"/><path d="M16 34V18h21" stroke="#f9a51a" stroke-width="6" fill="none"/><path d="M44 28q2 13-10 14" stroke="#fbc25a" stroke-width="6" fill="none" stroke-linecap="round"/><circle cx="42" cy="20" r="3" fill="#fbc25a"/></svg></button>
    <i class="rule"></i>
    <button aria-label="Document"><svg viewBox="0 0 58 58"><rect x="5" y="0" width="48" height="40" rx="4" fill="#45b2f2"/><path fill="#fff" d="M10 2h38v60H10z"/><path fill="#0f1722" d="M13 8h32v48H13z"/><path d="M14 12h30" stroke="#3d8fd0" stroke-width="4"/><path d="M14 20h30M14 26h30M14 32h30M14 38h30M14 44h30M14 50h30" stroke="#2f5878" stroke-width="2" stroke-dasharray="5 3"/></svg></button>
    <button class="trash" aria-label="Trash"><svg viewBox="0 0 58 68"><path d="M4 14h50l-6 48q-19 10-38 0z" fill="#7f8283"/><path d="M12 18h6l3 46h-6zM30 18h5v46h-5z" fill="#a0a3a4"/><ellipse cx="29" cy="14" rx="25" ry="6" fill="#6d6f70"/><path d="M9 14L16 3l7 5 6-8 6 8 8-4 6 10q-20 6-40 0z" fill="#efefef"/><path d="M20 9l5 5M33 5l2 8" stroke="#5a8a9a" stroke-width="2"/><path d="M40 8l-4 6" stroke="#c65a3a" stroke-width="2"/></svg></button>
  </nav>
</div>
</body>
</html>
```
FILE: styles.css
```css
* { box-sizing: border-box; }
body { margin: 0; font-family: Inter, "Liberation Sans", sans-serif; font-size: 28px; color: #5f6161; }
button, input { font: inherit; color: inherit; border: 0; background: none; padding: 0; margin: 0; }
input { outline: 0; min-width: 0; }
a { color: inherit; text-decoration: none; }
svg { display: block; flex: none; fill: currentColor; overflow: visible; }
i, em { font-style: normal; }
.sprite { position: absolute; width: 0; height: 0; }
.line { fill: none; stroke: currentColor; stroke-width: 2.5; }
.front { fill: #f7cfd1; }
.shaded { fill: #c6a1a5; }
.thick { stroke-width: 3; }
.white { fill: #fff; }
.dim { opacity: 0.45; }

.desktop {
  min-height: 100vh;
  display: flex;
  flex-direction: column;
  background:
    linear-gradient(90deg, #8d1c2b, #c04c59 196px, #dcbaba 198px 308px, #a93a49 312px 484px, #dcb0b2 490px, #4a0609 790px 888px, #e0c2c2 892px 990px, #8a1220 996px 1056px, #dfbcbc 1066px, #efcbc8) 0 100% / 100% 10px no-repeat,
    linear-gradient(90deg, #4a050c, #7d1c28 60px, #604040 50%, #937571 97%, #e6bfba) 0 100% / 100% 110px no-repeat,
    linear-gradient(90deg, #8a1b28, #d96a70 70px, #e8b5b5 400px, #8a1822 460px 800px, #e5b5b6 820px 1180px, #8a1822 1200px 1360px, #c08080 1450px, #8a1822 1850px 1980px, #d9b0b0 2000px, #e9c6c6);
}

.menubar { height: 48px; display: flex; justify-content: space-between; align-items: center; padding: 0 40px 2px; background: linear-gradient(90deg, #f3bbbf, #f4c2c5 50%, #fcd9d9); color: #0c0506; font-size: 25px; }
.menus { display: flex; align-items: center; gap: 43px; }
.i28 { width: 26px; height: 30px; }
.status { display: flex; align-items: center; gap: 37px; color: #241718; }
.status svg { height: 36px; }
.i36 { width: 36px; }
.i40 { width: 40px; }
.i44 { width: 44px; }
.status .battery { display: flex; align-items: center; gap: 8px; font-size: 23px; margin: 0 -6px; }
.battery svg { width: 52px; height: 26px; }
.status .i44 ~ svg { margin-left: -7px; }
.status time { display: flex; gap: 18px; margin-left: -4px; font-size: 26px; font-variant-numeric: tabular-nums; }
.faint { color: #c4a0a4; }

.window { flex: 1; margin-top: 4px; display: flex; flex-direction: column; position: relative; overflow: hidden; border-radius: 20px; background: #fff; box-shadow: 0 0 0 2px #120c0c; }
.window::after { content: ""; position: absolute; inset: auto 0 0 0; height: 110px; pointer-events: none; background: linear-gradient(#0000, #00000008 40%, #00000022); }

.chrome { background: #162313; }
.tabstrip { height: 80px; display: flex; align-items: center; border-top: 2px solid #5f6a5e; color: #bccdb6; }
.lights { display: flex; gap: 16px; width: 180px; padding-left: 42px; }
.lights i { width: 24px; height: 24px; border-radius: 50%; background: #737b71; }
.pins { display: flex; }
.pins button { width: 92px; height: 32px; display: grid; place-items: center; border-right: 3px solid #303d2d; }
.pins svg, .tab > svg { width: 32px; height: 32px; }
.tabs { display: flex; align-self: stretch; }
.tab { width: 182px; display: flex; align-items: center; padding-left: 20px; position: relative; font-size: 25px; }
.tab > svg { margin-right: 16px; }
.tab > svg:not(.white) { color: #000; }
.tab span { width: 42px; margin-right: 24px; -webkit-mask: linear-gradient(90deg, #000 50%, #0003); mask: linear-gradient(90deg, #000 50%, #0003); }
.tab button svg { width: 16px; height: 16px; }
.tab::after { content: ""; position: absolute; right: 0; top: 23px; width: 3px; height: 32px; background: #303d2d; }
.tab:first-child::after { display: none; }
.tab.active { color: #e6efe2; margin: 10px 4px 0; padding: 0 0 10px 16px; width: 174px; background: #303d2d; border-radius: 18px 18px 0 0; }
.tab.active::before, .tab.active::after { content: ""; position: absolute; top: auto; bottom: 0; width: 20px; height: 20px; }
.tab.active::before { left: -20px; background: radial-gradient(circle at 0 0, #0000 20px, #303d2d 20px); }
.tab.active::after { right: -20px; background: radial-gradient(circle at 100% 0, #0000 20px, #303d2d 20px); }
.newtab { margin-left: 20px; }
.newtab svg { width: 22px; height: 22px; }
.tabmenu { width: 56px; height: 56px; margin: 0 12px 0 auto; border-radius: 18px; display: grid; place-items: center; background: #303d2d; color: #e6efe2; }
.tabmenu svg { width: 20px; height: 20px; }

.toolbar { height: 94px; display: flex; align-items: center; padding: 0 12px 0 32px; background: #303d2d; border-bottom: 3px solid #454645; border-radius: 16px 16px 0 0; color: #bccdb6; }
.toolbar > button { margin-right: 48px; }
.toolbar > button svg { width: 24px; height: 24px; }
.toolbar > button:nth-of-type(3) { margin-right: 38px; }
.omnibox { flex: 1; height: 72px; display: flex; align-items: center; gap: 25px; padding: 0 28px 0 19px; border: 4px solid #9cd592; border-radius: 36px; color: #dbe4d8; }
.omnibox svg { width: 28px; height: 28px; }
.omnibox input { flex: 1; color: transparent; background: linear-gradient(90deg, #e8efe5 189px, #bac5b6 189px); -webkit-background-clip: text; background-clip: text; }
.omnibox .star { width: 36px; height: 36px; color: #bccdb6; }
.toolbar > .puzzle { margin: 0 34px 0 35px; }
.toolbar > .puzzle svg { width: 34px; height: 34px; }
.rule { width: 2px; height: 32px; background: #4e5f4a; }
.avatar { width: 56px; height: 56px; border-radius: 50%; background: #058b7c; color: #fff; display: grid; place-items: center; }
.avatar.small { width: 40px; height: 40px; font-size: 21px; margin: 0 26px 0 34px; }
.toolbar > .relaunch { height: 68px; margin: 0; padding: 0 29px 0 23px; border-radius: 34px; background: #1f5120; color: #d5ecce; display: flex; align-items: center; gap: 22px; font-size: 26px; }
.toolbar > .relaunch svg { width: 6px; height: 30px; }

.appbar { height: 120px; display: flex; align-items: center; padding: 0 40px 0 48px; border-bottom: 3px solid #e3e3e3; }
.logo { display: flex; gap: 7px; align-items: center; width: 221px; padding-bottom: 6px; color: #000; font-size: 50px; font-weight: 700; line-height: 48px; }
.logo svg { width: 36px; height: 36px; }
.topnav { display: flex; gap: 69px; flex: 1; }
.topnav a { display: flex; align-items: center; gap: 18px; }
.topnav svg { width: 36px; height: 36px; }
.search { display: flex; align-items: center; height: 72px; gap: 16px; padding: 0 28px; border-radius: 20px; background: #f8fafc; }
.search svg { width: 38px; height: 38px; color: #929292; }
.search input { flex: 1; }
.search input::placeholder { color: #5f6161; opacity: 1; }
.global { width: 1000px; padding-right: 27px; gap: 10px; }
.global svg { margin-right: 6px; }
kbd { width: 46px; height: 48px; border-radius: 14px; border: 2px solid #ececec; border-bottom-width: 4px; background: #fff; color: #d5d5d5; display: grid; place-items: center; font: 25px Inter, "DejaVu Sans", sans-serif; }
.builder, .invite { display: flex; align-items: center; gap: 18px; height: 72px; border-radius: 20px; }
.builder { margin-left: 8px; padding: 0 0 0 20px; background: #f4f5f7; color: #151515; width: 192px; }
.builder svg { width: 38px; height: 38px; }
.invite { width: 154px; margin: 0 22px 0 28px; }
.invite svg { width: 38px; height: 38px; }
.news { position: relative; margin-right: 42px; }
.news svg { width: 40px; height: 40px; }
.news::after { content: ""; position: absolute; right: -17px; top: -16px; width: 20px; height: 20px; border-radius: 50%; background: #f00; }
.dots { margin-right: 34px; }
.dots svg { width: 36px; height: 36px; }

.body { flex: 1; display: grid; grid-template-columns: 480px 1fr; }
.sidebar { background: #f8fafc; border-right: 2px solid #e0e3e5; padding-top: 32px; }
.sidebar nav a { display: flex; align-items: center; gap: 19px; height: 88px; padding: 0 0 2px 43px; border-left: 8px solid transparent; }
.sidebar nav svg { width: 30px; height: 30px; margin: 0 3px; }
.sidebar nav svg.big { width: 40px; height: 40px; margin: 0 -2px; }
.sidebar nav .on { background: #eaf0f2; border-color: #3ed0dc; color: #151515; }
.setup { margin: 40px 30px 0 32px; border: 2px solid #e3e6e8; border-radius: 14px; background: #fff; box-shadow: 0 6px 8px #dfe7ea; }
.setup-head { width: 100%; height: 96px; padding: 0 48px 0 32px; display: flex; align-items: center; justify-content: space-between; color: #151515; font-size: 31px; }
.setup-head svg { width: 18px; height: 18px; }
.bars { display: grid; grid-template-columns: repeat(5, 1fr); gap: 8px; padding: 8px 32px 28px; border-bottom: 2px solid #e3e5ea; }
.bars i { height: 8px; border-radius: 4px; background: #e6ecee; }
.bars .full { background: #25b04c; }
.setup ul { list-style: none; margin: 0; padding: 12px 0 12px 36px; }
.setup li { height: 80px; display: flex; align-items: center; gap: 20px; }
.setup li svg { width: 28px; height: 28px; }
.finished { color: #989a9a; }

.canvas { position: relative; overflow: hidden; }
.grid { position: absolute; inset: 0; width: 100%; height: 100%; }
.panel { position: absolute; left: 32px; top: 32px; display: flex; align-items: center; height: 104px; padding: 0 16px; border: 2px solid #e2e2e2; border-radius: 16px; background: #fff; box-shadow: 0 3px 6px #0000001c; }
.panel .search { width: 680px; padding-left: 27px; }
.panel .icon { margin-left: 32px; }
.panel .icon svg { width: 40px; height: 40px; }
.panel .icon + .icon { margin-left: 48px; }
.add { margin-left: 32px; width: 235px; height: 72px; display: flex; align-items: center; justify-content: center; gap: 24px; border: 2px solid #cfcfcf; border-radius: 16px; }
.add svg, .pill svg { width: 24px; height: 24px; }

.node { position: absolute; left: 156px; top: 179px; width: 1364px; padding: 64px 52px 58px; border: 3px solid #e3e3e3; border-radius: 24px; background: #fff; font-size: 31px; }
.node-top { display: flex; justify-content: space-between; align-items: center; height: 48px; }
.chip { display: flex; align-items: center; gap: 11px; height: 48px; padding: 0 18px 0 19px; border-radius: 22px; background: #f4f4f4; color: #969696; }
.chip svg { width: 42px; height: 42px; color: #cfcfcf; }
.tools { display: flex; gap: 56px; padding-right: 23px; color: #646464; }
.tools svg { width: 48px; height: 48px; }
.tools button:nth-child(3) svg { width: 42px; height: 42px; margin: 3px; }
h1 { display: flex; align-items: center; height: 78px; margin: 73px 0 38px 12px; color: #151515; font-size: 64px; font-weight: 400; }
.cube { width: 64px; height: 72px; margin-right: 33px; }
.plug { width: 54px; height: 54px; margin-left: 44px; color: #646464; }
.node-tabs { display: flex; height: 131px; border-bottom: 3px solid #e3e3e3; color: #8f8f8f; font-size: 41px; }
.node-tabs button { padding: 0 53px; }
.node-tabs .on { color: #151515; border-bottom: 6px solid #3ed0dc; padding-top: 6px; }
.pill { display: flex; align-items: center; gap: 18px; height: 64px; margin-top: 53px; padding: 0 20px 0 29px; border: 3px solid #d0d0d0; border-radius: 32px; }
.relation { margin-top: 351px; }
.node p { margin: 40px 0 0; line-height: 44px; color: #a0a0a0; }

.zoom { position: absolute; left: 29px; bottom: 30px; background: #fff; box-shadow: 0 0 4px 2px #00000014; color: #000; }
.zoom button { width: 54px; height: 54px; display: grid; place-items: center; border-bottom: 2px solid #eee; }
.zoom svg { width: 24px; height: 24px; }

.dock { margin: 2px 58px 10px; height: 94px; display: flex; align-items: center; padding: 0 5px; border: 2px solid #a07c7c; border-top-color: #7d6867; border-radius: 28px; background: linear-gradient(90deg, #7a2530, #6a4448 240px, #702a34 420px, #5c4342 660px, #4b2125 820px, #6a3236 1040px, #604c4b 1280px, #67504f 1900px, #8d6e6b); }
.dock button { flex: 1; height: 90px; position: relative; display: grid; place-items: center; padding-bottom: 4px; }
.dock button > svg { width: 58px; height: 58px; }
.dock .square > svg { width: 72px; height: 72px; }
.dock .trash > svg { height: 68px; }
.dock .run::after { content: ""; position: absolute; bottom: 3px; left: calc(50% - 4px); width: 8px; height: 8px; border-radius: 50%; background: #fbdcdc; }
.dock .rule { width: 2px; height: 70px; margin: 0 16px; background: #b39c9a; }
.dock em { position: absolute; right: 2px; top: 5px; min-width: 26px; height: 26px; border-radius: 13px; background: #f43e33; color: #fff; font-size: 17px; line-height: 26px; }
.month { font-size: 12px; font-weight: 600; text-anchor: middle; fill: #fff; }
.day { font-size: 32px; text-anchor: middle; fill: #222; }
.tv { font-size: 24px; text-anchor: middle; fill: #fff; }
.aa { font: 29px "Liberation Serif", serif; text-anchor: middle; fill: #f1dcd6; }
.pdf { font-size: 24px; font-weight: 700; font-style: italic; text-anchor: middle; fill: #fff; }
```
